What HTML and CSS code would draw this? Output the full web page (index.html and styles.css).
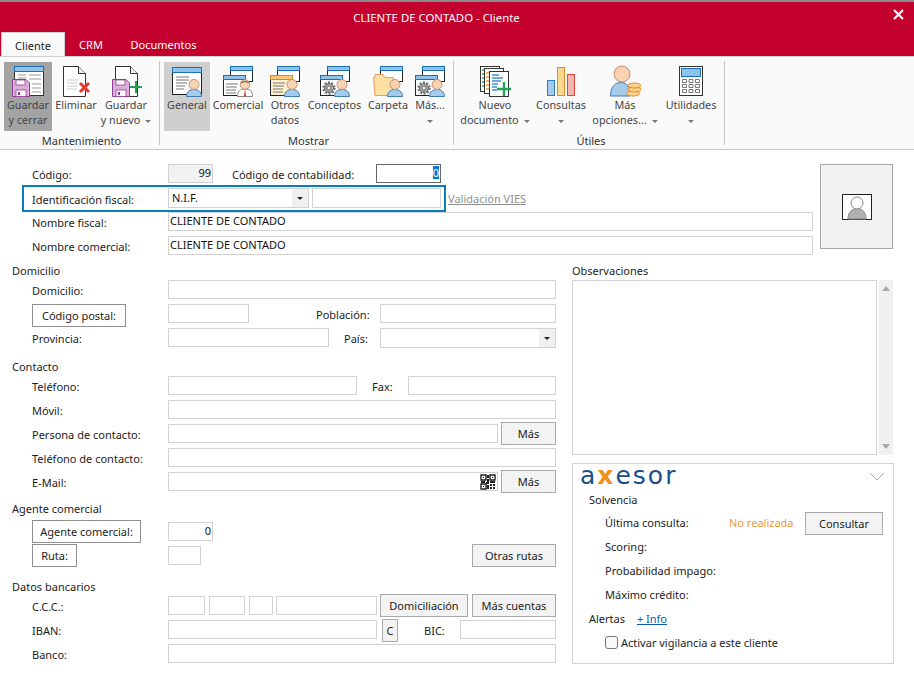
FILE: index.html
```html
<!DOCTYPE html>
<html lang="en">
<head>
    <meta charset="UTF-8">
    <title>Cliente de contado</title>
    <link rel="stylesheet" href="styles.css">
</head>
<body>
    <svg class="defs" width="0" height="0">
        <defs>
            <symbol id="person" viewBox="0 0 16 18">
                <path d="M.5 17.5C.5 12.5 4 10.500 8 10.500S15.500 12.500 15.500 17.500Z" fill="#a5cbeb" stroke="#3f7db8"/>
                <circle cx="8" cy="5.500" r="5" fill="#f9d2b2" stroke="#c4906b"/>
            </symbol>
            <symbol id="gear" viewBox="0 0 14 14">
                <circle cx="7" cy="7" r="5.500" fill="none" stroke="#777" stroke-width="2.400" stroke-dasharray="2 1.450"/>
                <circle cx="7" cy="7" r="4.500" fill="#a8a8a8" stroke="#666"/>
                <circle cx="7" cy="7" r="2" fill="#eee" stroke="#555" stroke-width=".8"/>
            </symbol>
            <symbol id="floppy" viewBox="0 0 18 18">
                <path d="M.5.5H14L17.500 4V17.500H.5Z" fill="#dcaed9" stroke="#8d3f8f"/>
                <rect x="4" y="1" width="9" height="5" fill="#fff" stroke="#8d3f8f" stroke-width=".8"/>
                <rect x="4" y="11" width="10" height="6.500" fill="#fff" stroke="#8d3f8f" stroke-width=".8"/>
                <rect x="6" y="13" width="2" height="3" fill="#8d3f8f"/>
            </symbol>
            <symbol id="page" viewBox="0 0 23 31">
                <path d="M.5.5H15.500L22.500 7.500V30.500H.5Z" fill="#fff" stroke="#333"/>
                <path d="M15.500.5V7.500H22.500" fill="#eee" stroke="#333"/>
            </symbol>
            <symbol id="back-win" viewBox="0 0 23 16">
                <rect x=".5" y=".5" width="22" height="15" fill="#fff" stroke="#222"/>
                <rect x=".5" y=".5" width="22" height="4" fill="#8fc3ea" stroke="#1b6fb5"/>
            </symbol>
            <symbol id="front-win" viewBox="0 0 23 21">
                <rect x=".5" y=".5" width="22" height="20" fill="#fff" stroke="#222"/>
                <rect x=".5" y=".5" width="22" height="4" fill="#8fc3ea" stroke="#1b6fb5"/>
            </symbol>
        </defs>
    </svg>

    <header class="titlebar">
        <div class="title-row">
            <div class="title">CLIENTE DE CONTADO - Cliente</div>
            <svg class="close" width="11" height="11" viewBox="0 0 11 11"><path d="M1 1L10 10M10 1L1 10" stroke="#fff" stroke-width="2.200"/></svg>
        </div>
        <nav class="tabs">
            <div class="tab active">Cliente</div>
            <div class="tab tab-crm">CRM</div>
            <div class="tab tab-docs">Documentos</div>
        </nav>
    </header>

    <section class="ribbon">
        <div class="group group-main">
            <div class="group-btns">
                <div class="rb-btn w48 pressed">
                    <svg class="ico" viewBox="0 0 32 32">
                        <rect x="2.500" y="1.500" width="29" height="29" fill="#fff" stroke="#333"/>
                        <rect x="2.500" y="1.500" width="29" height="5" fill="#8fc3ea" stroke="#1b6fb5"/>
                        <path d="M6 10H14M6 13H14M17 10H29M17 14H29M20 19H29M20 23H29M20 27H29" stroke="#999"/>
                        <use href="#floppy" x="0" y="14" width="18" height="18"/>
                    </svg>
                    <span>Guardar</span><span>y cerrar</span>
                </div>
                <div class="rb-btn w48">
                    <svg class="ico" viewBox="0 0 32 32">
                        <use href="#page" x="3" y="1" width="23" height="31"/>
                        <path d="M7 15H18M7 18H18M7 21H18M7 24H17" stroke="#ccc"/>
                        <path d="M20 18L29 27M29 18L20 27" stroke="#e8372b" stroke-width="3"/>
                    </svg>
                    <span>Eliminar</span>
                </div>
                <div class="rb-btn w52">
                    <svg class="ico" viewBox="0 0 32 32">
                        <use href="#page" x="5" y="1" width="23" height="31"/>
                        <use href="#floppy" x="2" y="14" width="18" height="18"/>
                        <path d="M26 16V28M20 22H32" stroke="#1fa45a" stroke-width="2"/>
                    </svg>
                    <span>Guardar</span><span>y nuevo<i class="caret"></i></span>
                </div>
            </div>
            <div class="group-label">Mantenimiento</div>
        </div>

        <div class="group group-show">
            <div class="group-btns">
                <div class="rb-btn w46 selected">
                    <svg class="ico" viewBox="0 0 32 32">
                        <rect x="1.500" y="2.500" width="29" height="27" fill="#fff" stroke="#222"/>
                        <rect x="1.500" y="2.500" width="29" height="5" fill="#8fc3ea" stroke="#1b6fb5"/>
                        <path d="M5 12H18M5 15H18M5 18H16M5 21H14M5 24H13" stroke="#777"/>
                        <use href="#person" x="15" y="14" width="16" height="18"/>
                    </svg>
                    <span>General</span>
                </div>
                <div class="rb-btn w56">
                    <svg class="ico" viewBox="0 0 32 32">
                        <use href="#back-win" x="8" y="1" width="23" height="16"/>
                        <use href="#front-win" x="1" y="10" width="23" height="21"/>
                        <path d="M4 19H16M4 22H15M4 25H14M4 28H14" stroke="#777"/>
                        <path d="M15.500 31.500C15.500 26 18 24 23 24S30.500 26 30.500 31.500Z" fill="#fff" stroke="#888"/>
                        <path d="M23 24L21.800 31.500H24.200Z" fill="#d93a3a"/>
                        <circle cx="23" cy="19.500" r="4.800" fill="#f9d2b2" stroke="#c4906b"/>
                        <path d="M18.500 18.500C19 15 27 15 27.500 18.500L23 17Z" fill="#666"/>
                    </svg>
                    <span>Comercial</span>
                </div>
                <div class="rb-btn w38">
                    <svg class="ico" viewBox="0 0 32 32">
                        <use href="#back-win" x="8" y="1" width="23" height="16"/>
                        <rect x="1.500" y="10.500" width="22" height="20" fill="#fdf0cf" stroke="#222"/>
                        <rect x="1.500" y="10.500" width="22" height="4" fill="#f9c77a" stroke="#d88a2c"/>
                        <path d="M4 18H16M4 21H15M4 24H14M4 27H14" stroke="#777"/>
                        <use href="#person" x="15" y="14" width="16" height="18"/>
                    </svg>
                    <span>Otros</span><span>datos</span>
                </div>
                <div class="rb-btn w61">
                    <svg class="ico" viewBox="0 0 32 32">
                        <use href="#back-win" x="8" y="1" width="23" height="16"/>
                        <use href="#front-win" x="1" y="10" width="23" height="21"/>
                        <use href="#gear" x="3" y="16" width="14" height="14"/>
                        <use href="#person" x="15" y="14" width="16" height="18"/>
                    </svg>
                    <span>Conceptos</span>
                </div>
                <div class="rb-btn w46">
                    <svg class="ico" viewBox="0 0 32 32">
                        <use href="#back-win" x="8" y="1" width="23" height="16"/>
                        <path d="M3 30.500L1.500 12.500H3V9.500H11L13 12.500H21L23 30.500Z" fill="#fde0a4" stroke="#e8a05c"/>
                        <use href="#person" x="15" y="14" width="16" height="18"/>
                    </svg>
                    <span>Carpeta</span>
                </div>
                <div class="rb-btn w38">
                    <svg class="ico" viewBox="0 0 32 32">
                        <use href="#back-win" x="8" y="1" width="23" height="16"/>
                        <use href="#front-win" x="1" y="10" width="23" height="21"/>
                        <use href="#gear" x="3" y="16" width="14" height="14"/>
                        <use href="#person" x="15" y="14" width="16" height="18"/>
                    </svg>
                    <span>Más...</span><span><i class="caret solo"></i></span>
                </div>
            </div>
            <div class="group-label">Mostrar</div>
        </div>

        <div class="group group-utils">
            <div class="group-btns">
                <div class="rb-btn w74">
                    <svg class="ico" viewBox="0 0 32 32">
                        <rect x="1.500" y="1.500" width="19" height="25" fill="#fff" stroke="#333"/>
                        <rect x="5.500" y="3.500" width="19" height="25" fill="#fff" stroke="#333"/>
                        <rect x="10.500" y="6.500" width="19" height="25" fill="#fff" stroke="#333"/>
                        <path d="M3 5H5M3 9H5M3 13H5M3 17H5M3 21H5" stroke="#2a9d5c" stroke-width="1.500"/>
                        <path d="M7 8H10M7 12H10M7 16H10M7 20H10M7 24H10" stroke="#e8a33c" stroke-width="1.500"/>
                        <path d="M13 10H20M13 13H24M13 16H22M13 19H19M13 22H18M13 25H18" stroke="#3f8fcf" stroke-width="1.300"/>
                        <path d="M25 17V31M18 24H32" stroke="#1fa45a" stroke-width="2.400"/>
                    </svg>
                    <span>Nuevo</span><span>documento<i class="caret"></i></span>
                </div>
                <div class="rb-btn w58">
                    <svg class="ico" viewBox="0 0 32 32">
                        <rect x="2.500" y="15.500" width="7" height="15" fill="#a5cbeb" stroke="#2f7dc0"/>
                        <rect x="12.500" y="2.500" width="7" height="28" fill="#fbd892" stroke="#e58a2e"/>
                        <rect x="22.500" y="9.500" width="7" height="21" fill="#f6b6ae" stroke="#e0453a"/>
                    </svg>
                    <span>Consultas</span><span><i class="caret solo"></i></span>
                </div>
                <div class="rb-btn w70">
                    <svg class="ico" viewBox="0 0 32 32">
                        <path d="M1.500 31C1.500 22 6 17.500 12 17.500S21 22 21 31Z" fill="#a5cbeb" stroke="#3f7db8"/>
                        <circle cx="13" cy="9" r="8" fill="#f9d2b2" stroke="#c4906b"/>
                        <ellipse cx="24" cy="28.500" rx="6.500" ry="2.500" fill="#fbd28c" stroke="#e58a2e"/>
                        <ellipse cx="25.500" cy="24.500" rx="6.500" ry="2.500" fill="#fbd28c" stroke="#e58a2e"/>
                        <ellipse cx="25.500" cy="20.500" rx="6.500" ry="2.500" fill="#fbd28c" stroke="#e58a2e"/>
                    </svg>
                    <span>Más</span><span>opciones...<i class="caret"></i></span>
                </div>
                <div class="rb-btn w62">
                    <svg class="ico" viewBox="0 0 32 32">
                        <rect x="4.500" y="1.500" width="23" height="29" fill="#fff" stroke="#333"/>
                        <rect x="6.500" y="3.500" width="19" height="8" fill="#8fc3ea" stroke="#1b6fb5"/>
                        <path d="M7.500 14.500h4v3h-4zM14 14.500h4v3h-4zM20.500 14.500h4v3h-4zM7.500 19.500h4v3h-4zM14 19.500h4v3h-4zM20.500 19.500h4v3h-4zM7.500 24.500h4v3h-4zM14 24.500h4v3h-4zM20.500 24.500h4v3h-4z" fill="none" stroke="#777"/>
                    </svg>
                    <span>Utilidades</span><span><i class="caret solo"></i></span>
                </div>
            </div>
            <div class="group-label">Útiles</div>
        </div>
    </section>

    <main class="form">
        <div class="top">
            <div class="top-fields">
                <div class="row">
                    <label class="lbl">Código:</label>
                    <div class="field readonly w45 num">99</div>
                    <label class="lbl-inline cont-label">Código de contabilidad:</label>
                    <div class="field focused w65 num"><span class="sel">0</span></div>
                </div>
                <div class="row">
                    <div class="fiscal-box">
                        <label class="lbl-fiscal">Identificación fiscal:</label>
                        <div class="field combo w141"><span>N.I.F.</span><b class="combo-btn"><i class="drop"></i></b></div>
                        <div class="field w129 nif"></div>
                    </div>
                    <a class="vies">Validación VIES</a>
                </div>
                <div class="row">
                    <label class="lbl">Nombre fiscal:</label>
                    <div class="field grow">CLIENTE DE CONTADO</div>
                </div>
                <div class="row">
                    <label class="lbl">Nombre comercial:</label>
                    <div class="field grow">CLIENTE DE CONTADO</div>
                </div>
            </div>
            <div class="photo">
                <svg width="30" height="26" viewBox="0 0 30 26">
                    <rect x=".5" y=".5" width="29" height="25" fill="#fff" stroke="#222"/>
                    <path d="M6 25C6 18 10 14.500 15 14.500S24 18 24 25Z" fill="#b0b0b0" stroke="#888"/>
                    <circle cx="15" cy="9" r="6" fill="#fff" stroke="#888"/>
                </svg>
            </div>
        </div>

        <div class="columns">
            <div class="col-left">
                <h2 class="heading first">Domicilio</h2>
                <div class="row">
                    <label class="lbl">Domicilio:</label>
                    <div class="field grow"></div>
                </div>
                <div class="row">
                    <button class="lbl-btn postal">Código postal:</button>
                    <div class="field w81"></div>
                    <label class="lbl-inline pob">Población:</label>
                    <div class="field grow"></div>
                </div>
                <div class="row">
                    <label class="lbl">Provincia:</label>
                    <div class="field w161"></div>
                    <label class="lbl-inline pais">País:</label>
                    <div class="field combo grow"><span></span><b class="combo-btn"><i class="drop"></i></b></div>
                </div>

                <h2 class="heading">Contacto</h2>
                <div class="row">
                    <label class="lbl">Teléfono:</label>
                    <div class="field w189"></div>
                    <label class="lbl-inline fax">Fax:</label>
                    <div class="field grow"></div>
                </div>
                <div class="row">
                    <label class="lbl">Móvil:</label>
                    <div class="field grow"></div>
                </div>
                <div class="row">
                    <label class="lbl">Persona de contacto:</label>
                    <div class="field w330"></div>
                    <button class="btn mas">Más</button>
                </div>
                <div class="row">
                    <label class="lbl">Teléfono de contacto:</label>
                    <div class="field grow"></div>
                </div>
                <div class="row">
                    <label class="lbl">E-Mail:</label>
                    <div class="field w330 qr-field">
                        <svg width="16" height="16" viewBox="0 0 16 16">
                            <path d="M1 1h5v5H1zM10 1h5v5h-5zM1 10h5v5H1z" fill="none" stroke="#222" stroke-width="1.400"/>
                            <path d="M3 3h1v1H3zM12 3h1v1h-1zM3 12h1v1H3zM7 1h2v3H7zM7 5h2v3H7zM1 7h4v2H1zM6 8h3v2H6zM10 7h5v2h-5zM7 11h2v4H7zM10 10h2v2h-2zM13 10h2v2h-2zM10 13h2v2h-2zM13 13h2v2h-2z" fill="#222"/>
                        </svg>
                    </div>
                    <button class="btn mas">Más</button>
                </div>

                <h2 class="heading agent">Agente comercial</h2>
                <div class="row">
                    <button class="lbl-btn agent-btn">Agente comercial:</button>
                    <div class="field w45 num">0</div>
                </div>
                <div class="row row-between">
                    <button class="lbl-btn ruta-btn">Ruta:</button>
                    <div class="field w33"></div>
                    <button class="btn rutas">Otras rutas</button>
                </div>

                <h2 class="heading bank">Datos bancarios</h2>
                <div class="row">
                    <label class="lbl">C.C.C.:</label>
                    <div class="ccc">
                        <div class="field w37"></div>
                        <div class="field w36"></div>
                        <div class="field w24"></div>
                        <div class="field w101"></div>
                    </div>
                    <button class="btn domic">Domiciliación</button>
                    <button class="btn cuentas">Más cuentas</button>
                </div>
                <div class="row">
                    <label class="lbl">IBAN:</label>
                    <div class="field w209"></div>
                    <button class="btn c-btn">C</button>
                    <label class="lbl-inline bic">BIC:</label>
                    <div class="field grow"></div>
                </div>
                <div class="row">
                    <label class="lbl">Banco:</label>
                    <div class="field grow"></div>
                </div>
            </div>

            <div class="col-right">
                <h2 class="heading first">Observaciones</h2>
                <div class="notes">
                    <div class="notes-area"></div>
                    <div class="scrollbar">
                        <i class="arrow-up"></i>
                        <i class="arrow-down"></i>
                    </div>
                </div>

                <div class="axesor">
                    <div class="ax-head">
                        <div class="ax-logo">a<b>x</b>esor</div>
                        <svg width="16" height="9" viewBox="0 0 16 9"><path d="M1 1L8 8L15 1" fill="none" stroke="#a8a8a8"/></svg>
                    </div>
                    <div class="ax-title ax-solv">Solvencia</div>
                    <div class="ax-row">
                        <span class="ax-lbl">Última consulta:</span>
                        <span class="ax-status">No realizada</span>
                        <button class="btn consultar">Consultar</button>
                    </div>
                    <div class="ax-row"><span class="ax-lbl">Scoring:</span></div>
                    <div class="ax-row"><span class="ax-lbl">Probabilidad impago:</span></div>
                    <div class="ax-row"><span class="ax-lbl">Máximo crédito:</span></div>
                    <div class="ax-title">Alertas <a class="ax-info">+ Info</a></div>
                    <div class="ax-row"><i class="check"></i>Activar vigilancia a este cliente</div>
                </div>
            </div>
        </div>
    </main>
</body>
</html>
```

FILE: styles.css
```css
* {
    box-sizing: border-box;
}
body {
    margin: 0;
    width: 914px;
    height: 699px;
    overflow: hidden;
    background: white;
    font-family: "Noto Sans", sans-serif;
    font-size: 11px;
    color: #1c1c1c;
}
.defs {
    position: absolute;
}

/* title bar */
.titlebar {
    height: 57px;
    background: #c4002e;
    border-top: 2px solid #8b8b8b;
    border-bottom: 1px solid #d0d0d0;
    color: white;
}
.title-row {
    height: 30px;
    display: flex;
    align-items: center;
    padding-right: 10px;
}
.title {
    flex: 1;
    text-align: center;
    padding-right: 20px;
    font-size: 11.400px;
}
.close {
    margin-top: -6px;
}
.tabs {
    display: flex;
    height: 24px;
    margin-left: 1px;
}
.tab {
    display: flex;
    align-items: center;
    justify-content: center;
    font-size: 11px;
    padding-top: 1px;
}
.tab.active {
    width: 64px;
    background: #fafafa;
    color: #222;
    border: 1px solid #d0d0d0;
    border-bottom: none;
}
.tab-crm {
    width: 52px;
}
.tab-docs {
    width: 93px;
}

/* ribbon */
.ribbon {
    height: 93px;
    display: flex;
    background: #fafafa;
    border-bottom: 1px solid #c8c8c8;
    padding-top: 4px;
    color: #444;
}
.group {
    height: 84px;
    border-right: 1px solid #c6c6c6;
}
.group-main {
    width: 156px;
    margin-left: 4px;
}
.group-show {
    width: 294px;
    padding-left: 4px;
}
.group-utils {
    width: 271px;
    padding-left: 4px;
}
.group-btns {
    display: flex;
    padding-top: 1px;
}
.group-label {
    margin-top: 2px;
    line-height: 16px;
    text-align: center;
    color: #333;
}
.rb-btn {
    height: 69px;
    display: flex;
    flex-direction: column;
    align-items: center;
    padding-top: 3px;
    font-size: 10.800px;
    line-height: 15px;
    white-space: nowrap;
}
.rb-btn span {
    height: 15px;
}
.ico {
    width: 32px;
    height: 32px;
    flex: none;
}
.pressed {
    background: #a3a3a3;
}
.selected {
    background: #cfcfcf;
}
.w48 { width: 48px; }
.w52 { width: 52px; }
.w46 { width: 46px; }
.w56 { width: 56px; }
.w38 { width: 38px; }
.w61 { width: 61px; }
.w74 { width: 74px; }
.w58 { width: 58px; }
.w70 { width: 70px; }
.w62 { width: 62px; }
.caret {
    display: inline-block;
    margin-left: 5px;
    border: 3px solid transparent;
    border-top: 3px solid #777;
    border-bottom: none;
    vertical-align: middle;
}
.caret.solo {
    margin-left: 0;
}

/* form */
.form {
    padding: 12px 20px 0 12px;
}
.top {
    display: flex;
    align-items: flex-start;
}
.top-fields {
    width: 801px;
}
.photo {
    width: 73px;
    height: 85px;
    margin: 2px 0 0 7px;
    background: #f1f1f1;
    border: 1px solid #a6a6a6;
    display: flex;
    align-items: center;
    justify-content: center;
}
.row {
    height: 24px;
    display: flex;
    align-items: flex-start;
}
.lbl {
    width: 136px;
    margin-left: 20px;
    flex: none;
    align-self: center;
}
.lbl-inline {
    flex: none;
    align-self: center;
}
.field {
    height: 19px;
    flex: none;
    margin-top: 2px;
    border: 1px solid #d2d2d2;
    background: white;
    line-height: 15px;
    padding: 0 1px;
    color: #111;
    white-space: nowrap;
}
.grow {
    flex: 1;
}
.num {
    text-align: right;
}
.readonly {
    background: #f2f2f2;
}
.focused {
    border-color: #666;
}
.sel {
    display: inline-block;
    background: #0078d7;
    color: white;
    line-height: 13px;
    margin-top: 1px;
}
.w45 { width: 45px; }
.w65 { width: 65px; }
.w141 { width: 141px; }
.w129 { width: 129px; }
.w81 { width: 81px; }
.w161 { width: 161px; }
.w189 { width: 189px; }
.w330 { width: 330px; }
.w33 { width: 33px; }
.w37 { width: 37px; }
.w36 { width: 36px; }
.w24 { width: 24px; }
.w101 { width: 101px; }
.w209 { width: 209px; }
.cont-label {
    margin-left: 19px;
    width: 144px;
}
.fiscal-box {
    width: 424px;
    height: 27px;
    margin: -1px 0 0 10px;
    padding-top: 1px;
    border: 2px solid #0a7cc0;
    display: flex;
    align-items: flex-start;
    flex: none;
}
.fiscal-box .field {
    margin-top: 0;
}
.lbl-fiscal {
    width: 144px;
    padding-left: 8px;
    flex: none;
    align-self: center;
}
.combo {
    display: flex;
    justify-content: space-between;
    padding: 0 0 0 3px;
    height: 20px;
    line-height: 18px;
}
.combo-btn {
    width: 16px;
    background: #f0f0f0;
    display: flex;
    align-items: center;
    justify-content: center;
}
.drop {
    border: 3px solid transparent;
    border-top: 3px solid #222;
    border-bottom: none;
}
.fiscal-box .nif {
    margin-left: 3px;
    height: 20px;
}
.vies {
    margin-left: 2px;
    align-self: center;
    color: #8e8e8e;
    text-decoration: underline;
}
.columns {
    display: flex;
    gap: 16px;
}
.col-left {
    width: 544px;
}
.col-right {
    width: 322px;
}
.heading {
    margin: 8px 0 0;
    height: 16px;
    line-height: 18px;
    font-size: 11px;
    font-weight: normal;
    color: #1c1c1c;
}
.heading.first {
    margin-top: 4px;
}
.heading.agent {
    margin-bottom: 2px;
    line-height: 14px;
}
.heading.bank {
    margin-top: 10px;
}

/* buttons */
.btn, .lbl-btn {
    height: 23px;
    flex: none;
    font-family: inherit;
    font-size: 11px;
    color: #1c1c1c;
    padding: 0;
    text-align: center;
}
.btn {
    background: #f3f3f3;
    border: 1px solid #a9a9a9;
}
.lbl-btn {
    background: white;
    border: 1px solid #8f8f8f;
    margin-left: 20px;
}
.postal { width: 94px; margin: 2px 42px 0 20px; }
.agent-btn { width: 109px; margin-right: 27px; }
.ruta-btn { width: 45px; margin-right: 91px; }
.pob { margin-left: 67px; width: 64px; }
.pais { margin-left: 15px; width: 36px; }
.fax { margin-left: 15px; width: 36px; }
.bic { margin-left: 26px; width: 36px; }
.mas { width: 55px; margin-left: 3px; }
.rutas { width: 84px; margin-left: auto; }
.domic { width: 88px; margin-left: 3px; }
.cuentas { width: 84px; margin-left: 4px; }
.c-btn { width: 16px; margin: 1px 0 0 5px; }
.ccc {
    display: flex;
    gap: 4px;
}
.ccc .w24 {
    margin-right: -1px;
}
.qr-field {
    display: flex;
    justify-content: flex-end;
    padding: 1px 1px 0 0;
}

/* observaciones */
.notes {
    display: flex;
    height: 175px;
    margin-top: 2px;
    gap: 2px;
}
.notes-area {
    width: 305px;
    border: 1px solid #d2d2d2;
}
.scrollbar {
    width: 14px;
    background: #f0f0f0;
    display: flex;
    flex-direction: column;
    justify-content: space-between;
    align-items: center;
    padding: 6px 0;
}
.arrow-up {
    border: 4px solid transparent;
    border-bottom: 5px solid #a8a8a8;
    border-top: none;
}
.arrow-down {
    border: 4px solid transparent;
    border-top: 5px solid #a8a8a8;
    border-bottom: none;
}

/* axesor */
.axesor {
    height: 201px;
    margin-top: 8px;
    border: 1px solid #d2d2d2;
    padding: 0 10px 0 16px;
}
.ax-head {
    display: flex;
    justify-content: space-between;
    align-items: center;
    height: 24px;
    margin: 0 -2px 0 -9px;
}
.ax-logo {
    font-family: "DejaVu Sans", sans-serif;
    font-size: 25px;
    letter-spacing: 2px;
    color: #1b4f8a;
    line-height: 24px;
}
.ax-logo b {
    color: #f0921e;
    font-weight: bold;
}
.ax-title {
    height: 24px;
    line-height: 24px;
}
.ax-solv {
    margin-bottom: -1px;
}
.ax-row {
    height: 24px;
    display: flex;
    align-items: center;
    padding: 0 0 2px 16px;
}
.ax-lbl {
    width: 124px;
    flex: none;
}
.ax-status {
    width: 76px;
    flex: none;
    color: #ee9a2e;
}
.consultar {
    width: 78px;
    margin-bottom: -2px;
}
.ax-info {
    margin-left: 9px;
    color: #0a5fa8;
    text-decoration: underline;
}
.check {
    width: 13px;
    height: 13px;
    margin-right: 3px;
    border: 1px solid #777;
    border-radius: 3px;
    background: #fafafa;
}
```
